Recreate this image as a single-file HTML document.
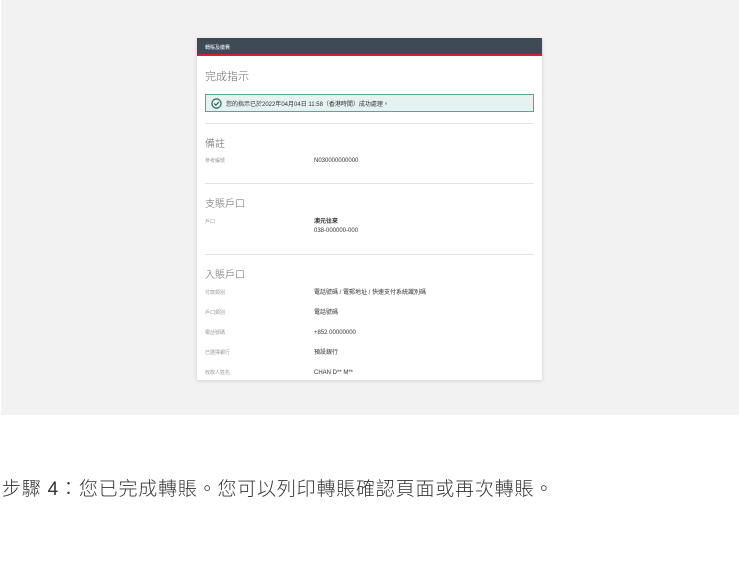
<!DOCTYPE html>
<html><head><meta charset="utf-8"><style>
*{margin:0;padding:0;box-sizing:border-box}
body{width:739px;height:580px;background:#fff;font-family:"Liberation Sans","Noto Sans CJK TC",sans-serif;position:relative;overflow:hidden}
.bg{position:absolute;left:1px;top:0;width:738px;height:415px;background:#f2f2f2}
.card{position:absolute;left:197px;top:38px;width:345px;height:342px;background:#fff;box-shadow:0 1px 4px rgba(0,0,0,.15);overflow:hidden}
.hd{height:18px;background:#3e4a56;border-bottom:2px solid #d9202a;color:#fff;font-size:5px;padding:6px 8px}
.t{position:absolute;left:8px;color:#666;font-size:11px;font-weight:300}
.ok{position:absolute;left:8px;top:56px;width:329px;height:18px;background:#e6f2f0;border:1px solid #5aa59a;font-size:6px;color:#333;padding:4px 0 0 20px}
.ok svg{position:absolute;left:5px;top:3px}
.hr{position:absolute;left:8px;width:329px;height:1px;background:#e3e3e3}
.l{position:absolute;left:8px;font-size:5px;color:#999}
.v{position:absolute;left:117px;font-size:6px;color:#333;line-height:1}
.cap{position:absolute;left:2px;top:474px;font-size:19px;color:#333;white-space:nowrap;letter-spacing:0.8px;font-weight:300}
</style></head><body>
<div class="bg"></div>
<div class="card">
<div class="hd">轉賬及繳費</div>
<div class="t" style="top:30px">完成指示</div>
<div class="ok"><svg width="11" height="11" viewBox="0 0 11 11"><circle cx="5.5" cy="5.5" r="4.6" fill="none" stroke="#2d5e55" stroke-width="1.2"/><path d="M3.2 5.6 L4.9 7.2 L7.9 4" fill="none" stroke="#2d5e55" stroke-width="1.2"/></svg>您的指示已於2022年04月04日 11:58（香港時間）成功處理。</div>
<div class="hr" style="top:85px"></div>
<div class="t" style="top:97px;font-size:10px">備註</div>
<div class="l" style="top:119px">參考編號</div><div class="v" style="top:120px">N030000000000</div>
<div class="hr" style="top:145px"></div>
<div class="t" style="top:157px;font-size:10px">支賬戶口</div>
<div class="l" style="top:180px">戶口</div><div class="v" style="top:181px;font-weight:bold">澳元往來</div><div class="v" style="top:190px">038-000000-000</div>
<div class="hr" style="top:216px"></div>
<div class="t" style="top:228px;font-size:10px">入賬戶口</div>
<div class="l" style="top:251px">付款類別</div><div class="v" style="top:252px">電話號碼 / 電郵地址 / 快速支付系統識別碼</div>
<div class="l" style="top:271px">戶口類別</div><div class="v" style="top:272px">電話號碼</div>
<div class="l" style="top:291px">電話號碼</div><div class="v" style="top:292px">+852 00000000</div>
<div class="l" style="top:311px">已選擇銀行</div><div class="v" style="top:312px">預設銀行</div>
<div class="l" style="top:331px">收款人姓名</div><div class="v" style="top:332px">CHAN D** M**</div>
</div>
<div class="cap">步驟 4：您已完成轉賬。您可以列印轉賬確認頁面或再次轉賬。</div>
</body></html>
